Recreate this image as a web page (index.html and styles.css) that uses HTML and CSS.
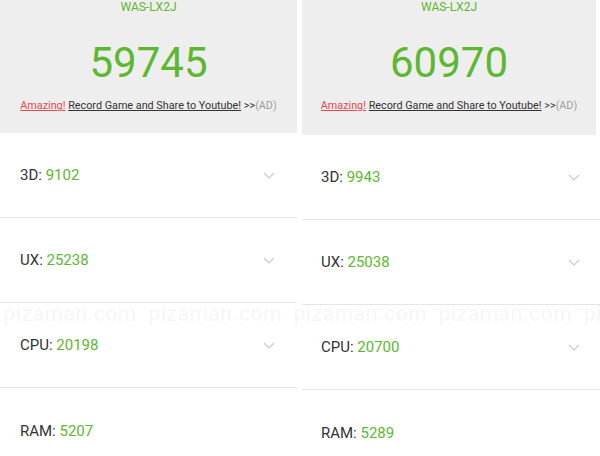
FILE: index.html
```html
<!DOCTYPE html>
<html lang="en">
<head>
    <meta charset="UTF-8">
    <meta name="viewport" content="width=device-width, initial-scale=1.0">
    <title>AnTuTu - WAS-LX2J</title>
    <link rel="stylesheet" href="styles.css">
</head>
<body>
    <div class="panel">
        <div class="score-head">
            <div class="device">WAS-LX2J</div>
            <div class="total">59745</div>
            <div class="ad-line">
                <a class="amazing" href="#">Amazing!</a> <a class="record" href="#">Record Game and Share to Youtube!</a> &gt;&gt;<span class="ad">(AD)</span>
            </div>
        </div>
        <div class="row">
            <span class="label">3D: <span class="value">9102</span></span>
            <svg class="chevron" width="12" height="7" viewBox="0 0 12 7"><polyline points="1,1 6,6 11,1" fill="none" stroke="#c9c9c9" stroke-width="1.1"/></svg>
        </div>
        <div class="row">
            <span class="label">UX: <span class="value">25238</span></span>
            <svg class="chevron" width="12" height="7" viewBox="0 0 12 7"><polyline points="1,1 6,6 11,1" fill="none" stroke="#c9c9c9" stroke-width="1.1"/></svg>
        </div>
        <div class="row">
            <span class="label">CPU: <span class="value">20198</span></span>
            <svg class="chevron" width="12" height="7" viewBox="0 0 12 7"><polyline points="1,1 6,6 11,1" fill="none" stroke="#c9c9c9" stroke-width="1.1"/></svg>
        </div>
        <div class="row last">
            <span class="label">RAM: <span class="value">5207</span></span>
        </div>
    </div>

    <div class="panel panel-right">
        <div class="score-head">
            <div class="device">WAS-LX2J</div>
            <div class="total">60970</div>
            <div class="ad-line">
                <a class="amazing" href="#">Amazing!</a> <a class="record" href="#">Record Game and Share to Youtube!</a> &gt;&gt;<span class="ad">(AD)</span>
            </div>
        </div>
        <div class="row">
            <span class="label">3D: <span class="value">9943</span></span>
            <svg class="chevron" width="12" height="7" viewBox="0 0 12 7"><polyline points="1,1 6,6 11,1" fill="none" stroke="#c9c9c9" stroke-width="1.1"/></svg>
        </div>
        <div class="row">
            <span class="label">UX: <span class="value">25038</span></span>
            <svg class="chevron" width="12" height="7" viewBox="0 0 12 7"><polyline points="1,1 6,6 11,1" fill="none" stroke="#c9c9c9" stroke-width="1.1"/></svg>
        </div>
        <div class="row">
            <span class="label">CPU: <span class="value">20700</span></span>
            <svg class="chevron" width="12" height="7" viewBox="0 0 12 7"><polyline points="1,1 6,6 11,1" fill="none" stroke="#c9c9c9" stroke-width="1.1"/></svg>
        </div>
        <div class="row last">
            <span class="label">RAM: <span class="value">5289</span></span>
        </div>
    </div>

    <div class="watermark">pizaman.com pizaman.com pizaman.com pizaman.com pizaman.com</div>
</body>
</html>
```

FILE: styles.css
```css
:root {
    --green: #5cb82e;
    --head-bg: #efeeef;
    --text-dark: #333333;
    --divider: #e6e6e6;
    --font-primary: Roboto, 'Liberation Sans', Arial, sans-serif;
}

* {
    margin: 0;
    padding: 0;
    box-sizing: border-box;
}

body {
    position: relative;
    width: 600px;
    height: 456px;
    overflow: hidden;
    display: flex;
    gap: 5px;
    background: white;
    font-family: var(--font-primary);
    color: var(--text-dark);
}

.panel {
    width: 297px;
    display: flex;
    flex-direction: column;
}

.panel-right {
    width: 298px;
}

.score-head {
    flex-shrink: 0;
    height: 133px;
    background: var(--head-bg);
    display: flex;
    flex-direction: column;
    align-items: center;
}

.panel-right .score-head {
    height: 135px;
    margin-right: 4px;
}

.device {
    font-size: 12px;
    line-height: 14px;
    color: var(--green);
}

.total {
    margin-top: 25px;
    font-size: 42px;
    line-height: 48px;
    color: var(--green);
}

.ad-line {
    margin-top: 11px;
    font-size: 10.8px;
    line-height: 15px;
    color: var(--text-dark);
    white-space: nowrap;
}

.ad-line a {
    text-decoration: underline;
}

.amazing {
    color: #e8464c;
}

.record {
    color: var(--text-dark);
}

.ad {
    color: #9e9e9e;
}

.row {
    flex-shrink: 0;
    height: 85px;
    display: flex;
    align-items: center;
    justify-content: space-between;
    padding: 0 22px 0 20px;
    border-bottom: 1px solid var(--divider);
}

.panel-right .row {
    padding-left: 19px;
    padding-right: 20px;
}

.row.last {
    border-bottom: none;
}

.label {
    font-size: 15px;
    color: var(--text-dark);
}

.value {
    color: var(--green);
}

.chevron {
    display: block;
}

.watermark {
    position: absolute;
    top: 300px;
    left: 3px;
    right: 0;
    overflow: hidden;
    white-space: nowrap;
    font-size: 22px;
    line-height: 28px;
    font-weight: bold;
    word-spacing: 6px;
    color: rgba(0, 0, 0, 0.035);
    pointer-events: none;
}
```
